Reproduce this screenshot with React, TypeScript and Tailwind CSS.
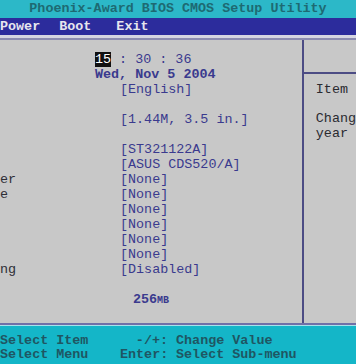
import React from "react";

const mono = "font-['Liberation_Mono','Courier_New',monospace]";

type Row = { label?: string; value?: string };

const rows: Row[] = [
  { value: "[English]" },
  {},
  { value: "[1.44M, 3.5 in.]" },
  {},
  { value: "[ST321122A]" },
  { value: "[ASUS CDS520/A]" },
  { label: "er", value: "[None]" },
  { label: "e", value: "[None]" },
  { value: "[None]" },
  { value: "[None]" },
  { value: "[None]" },
  { value: "[None]" },
  { label: "ng", value: "[Disabled]" },
  {},
];

export default function App() {
  return (
    <div className={`${mono} flex h-[364px] w-[356px] flex-col overflow-hidden bg-[#c8c8c8] text-[13.4px]`}>
      {/* title */}
      <div className="flex h-[18px] items-center justify-center bg-[#2cb8c8] font-bold text-[#1e6a72]">
        Phoenix-Award BIOS CMOS Setup Utility
      </div>
      {/* menu */}
      <div className="flex h-[17px] items-center gap-[19px] bg-[#2c2c9c] pt-[2px] font-bold text-[#e6e6ee]">
        <span>Power</span>
        <span>Boot</span>
        <span className="ml-[6px]">Exit</span>
      </div>
      <div className="h-[3px] bg-[#d6d6e2]" />
      <div className="h-[2px] bg-[#8c8cb0]" />

      {/* body */}
      <div className="flex flex-1">
        <div className="w-[303px] pt-[12px] leading-[15px] text-[#3a3a8e]">
          <div className="flex h-[15px] whitespace-pre pl-[95px]">
            <span className="bg-[#111] text-white">15</span>
            <span> : 30 : 36</span>
          </div>
          <div className="h-[15px] whitespace-pre pl-[95px] font-bold">Wed, Nov 5 2004</div>
          {rows.map((r, i) => (
            <div key={i} className="flex h-[15px] whitespace-pre">
              <span className="w-[120px] text-[#2e2e36]">{r.label}</span>
              <span>{r.value}</span>
            </div>
          ))}
          <div className="h-[15px] pl-[133px] font-bold">
            256<span className="text-[10px]">MB</span>
          </div>
        </div>
        <div className="w-[2px] bg-[#4c4c84]" />
        <div className="flex-1">
          <div className="h-[34px] border-b-2 border-[#4c4c84]" />
          <div className="pl-[12px] pt-[8px] leading-[15px] text-[#2a2a30]">
            <div>Item</div>
            <div className="mt-[14px]">Chang</div>
            <div>year</div>
          </div>
        </div>
      </div>

      <div className="h-[2px] bg-[#7070a8]" />
      <div className="h-[1px] bg-[#a8e0ea]" />
      {/* footer */}
      <div className="h-[38px] bg-[#14b6c8] pt-[8px] font-bold leading-[13.5px] text-[#1f5663]">
        <div className="flex whitespace-pre">
          <span className="w-[120px]">Select Item</span>
          <span className="w-[48px] text-right">-/+:</span>
          <span> Change Value</span>
        </div>
        <div className="flex whitespace-pre">
          <span className="w-[120px]">Select Menu</span>
          <span className="w-[48px] text-right">Enter:</span>
          <span> Select Sub-menu</span>
        </div>
      </div>
    </div>
  );
}
